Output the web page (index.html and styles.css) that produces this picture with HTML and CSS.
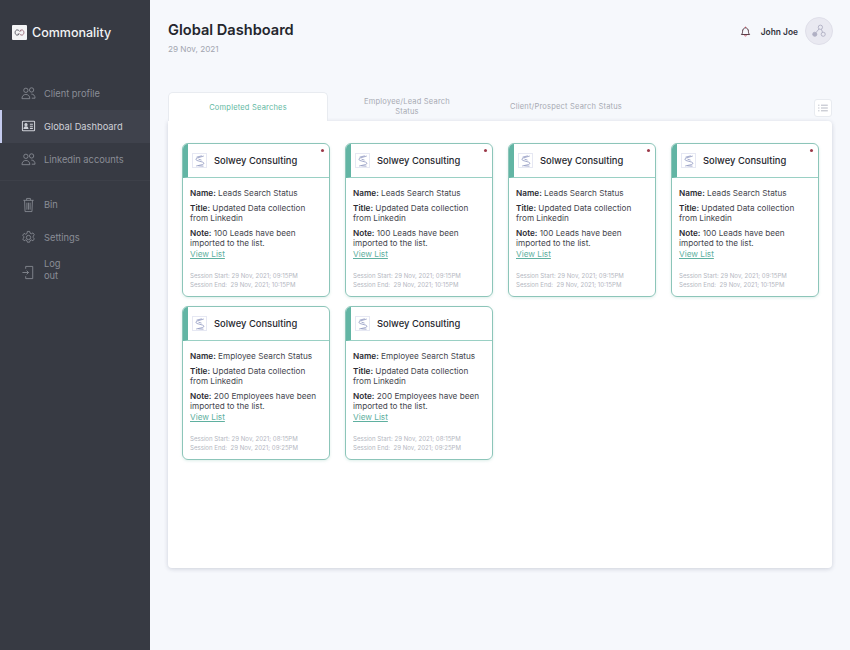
FILE: index.html
```html
<!DOCTYPE html>
<html lang="en">
<head>
  <meta charset="UTF-8" />
  <title>Global Dashboard</title>
  <link rel="stylesheet" href="styles.css">
</head>
<body>

  <div class="app">
    <!-- Sidebar -->
    <aside class="sidebar">
      <div class="brand">
        <span class="brand-logo">
          <svg width="11" height="7" viewBox="0 0 12 8" fill="none" stroke="#5a5a64" stroke-width="1.100"><path d="M6 2.600C5.200 1.600 4.400 1 3.300 1 2 1 1 2.400 1 4s1 3 2.300 3c1 0 1.600-.5 2.200-1.200H4"/><path d="M6 5.400C6.800 6.400 7.600 7 8.700 7 10 7 11 5.600 11 4S10 1 8.700 1c-1 0-1.600.5-2.200 1.200H8" stroke="#9a6a78"/></svg>
        </span>
        <span class="brand-name">Commonality</span>
      </div>

      <nav class="nav nav-main">
        <a class="nav-item" href="#">
          <svg class="nav-icon" viewBox="0 0 16 14" fill="none" stroke="currentColor" stroke-width="0.9"><circle cx="5.200" cy="3.600" r="2.300"/><circle cx="11.300" cy="3.200" r="2.300"/><path d="M1 12.500c0-2.800 1.700-4.500 4.200-4.500s4.200 1.700 4.200 4.500z"/><path d="M11 7.600c2.400 0 4 1.600 4 4.400h-3.500"/></svg>
          <span>Client profile</span>
        </a>
        <a class="nav-item active" href="#">
          <svg class="nav-icon" viewBox="0 0 16 14" fill="none" stroke="currentColor" stroke-width="1.100"><rect x="1.500" y="1.500" width="13" height="10" rx="0.800"/><circle cx="5.300" cy="5" r="1.200" fill="currentColor"/><path d="M3.200 9.200c0-1.500 1-2 2.100-2s2.100.5 2.100 2z" fill="currentColor"/><path d="M9.500 4.600h3.200M9.500 6.800h3.200M9.500 9h3.200"/></svg>
          <span>Global Dashboard</span>
        </a>
        <a class="nav-item" href="#">
          <svg class="nav-icon" viewBox="0 0 16 14" fill="none" stroke="currentColor" stroke-width="0.9"><circle cx="5.200" cy="3.600" r="2.300"/><circle cx="11.300" cy="3.200" r="2.300"/><path d="M1 12.500c0-2.800 1.700-4.500 4.200-4.500s4.200 1.700 4.200 4.500z"/><path d="M11 7.600c2.400 0 4 1.600 4 4.400h-3.500"/></svg>
          <span>Linkedin accounts</span>
        </a>
      </nav>

      <nav class="nav nav-bottom">
        <a class="nav-item" href="#">
          <svg class="nav-icon bin-icon" viewBox="0 0 16 16" fill="none" stroke="currentColor" stroke-width="0.9"><path d="M2.500 3h11M6 3V1h4v2M3.800 3l.5 12h7.400l.5-12M6.300 5.500v7.500M8 5.500v7.500M9.700 5.500v7.500"/></svg>
          <span>Bin</span>
        </a>
        <a class="nav-item" href="#">
          <svg class="nav-icon" viewBox="0 0 16 16" fill="none" stroke="currentColor" stroke-width="0.9"><circle cx="8" cy="8" r="2.300"/><path d="M6.800 1.500h2.400l.4 1.800 1.500.7 1.600-.9 1.500 2-1.200 1.400v1.500l1.200 1.500-1.500 2-1.600-.9-1.500.7-.4 1.700H6.800l-.4-1.700-1.500-.7-1.600.9-1.500-2L3 8.500V7L1.800 5.600l1.500-2 1.600.9 1.500-.7z"/></svg>
          <span>Settings</span>
        </a>
        <a class="nav-item logout" href="#">
          <svg class="nav-icon" viewBox="0 0 16 16" fill="none" stroke="currentColor" stroke-width="0.9"><path d="M5 4V1.500h7.500v13H5V12"/><path d="M1.500 8h6.500M6 6l2 2-2 2"/></svg>
          <span>Log<br>out</span>
        </a>
      </nav>
    </aside>

    <!-- Main content -->
    <main class="main">
      <header class="topbar">
        <div>
          <h1>Global Dashboard</h1>
          <p class="date">29 Nov, 2021</p>
        </div>
        <div class="user">
          <svg class="bell" width="11" height="11" viewBox="0 0 12 12" fill="none" stroke="#4a2a36" stroke-width="1"><path d="M1.500 9.300c1-1 1.300-1.800 1.300-3.500C2.800 3.800 4.200 2 6 2s3.200 1.800 3.200 3.800c0 1.700.3 2.500 1.300 3.500z"/><path d="M4.800 10.300c.3.700 2.100.7 2.400 0" stroke="#c23a4a"/><path d="M6 .8V2" stroke="#c23a4a"/></svg>
          <span class="user-name">John Joe</span>
          <span class="avatar">
            <svg width="14" height="14" viewBox="0 0 15 15" fill="none" stroke="#b0b0c4" stroke-width="1"><circle cx="9" cy="3.500" r="2.300"/><circle cx="3" cy="11" r="2.200" fill="#b0b0c4"/><circle cx="12" cy="11" r="2.200"/><path d="M7.500 5.300 4.300 9.200M10 5.600l1.300 3.200"/></svg>
          </span>
        </div>
      </header>

      <div class="tabs-row">
        <a class="tab active" href="#">Completed Searches</a>
        <a class="tab" href="#">Employee/Lead Search Status</a>
        <a class="tab tab-wide" href="#">Client/Prospect Search Status</a>
        <button class="list-btn">
          <svg width="10" height="8" viewBox="0 0 12 10" fill="none" stroke="#a4a8b6" stroke-width="1"><path d="M3.500 1.500H12M3.500 5H12M3.500 8.500H12M0 1.500h1.500M0 5h1.500M0 8.500h1.500"/></svg>
        </button>
      </div>

      <section class="panel">
        <div class="card-grid" id="cards"></div>
      </section>
    </main>
  </div>

  <script>
    const cards = [
      { name: "Leads Search Status", note: "100 Leads have been", start: "09:15PM", end: "10:15PM", dot: true },
      { name: "Leads Search Status", note: "100 Leads have been", start: "09:15PM", end: "10:15PM", dot: true },
      { name: "Leads Search Status", note: "100 Leads have been", start: "09:15PM", end: "10:15PM", dot: true },
      { name: "Leads Search Status", note: "100 Leads have been", start: "09:15PM", end: "10:15PM", dot: true },
      { name: "Employee Search Status", note: "200 Employees have been", start: "08:15PM", end: "09:25PM" },
      { name: "Employee Search Status", note: "200 Employees have been", start: "08:15PM", end: "09:25PM" }
    ];

    const logo = `<svg width="10" height="12" viewBox="0 0 10 12" fill="none" stroke="#8f98c0" stroke-width="0.8"><path d="M8.800 1 2.200 3C.6 3.500.6 5 2 5.500l5.600 1.600C9.200 7.600 9.200 9 7.800 9.500L1.200 11"/><path d="M6.800.8 1.500 2.200M3.500 4.200l3 .9M8.500 11.200 3.200 10.800"/></svg>`;

    document.getElementById("cards").innerHTML = cards.map(c => `
      <article class="card">
        <div class="card-head">
          <span class="card-logo">${logo}</span>
          <span class="card-title">Solwey Consulting</span>
          ${c.dot ? '<span class="dot"></span>' : ''}
        </div>
        <div class="card-body">
          <p><b>Name:</b> ${c.name}</p>
          <p><b>Title:</b> Updated Data collection<br>from Linkedin</p>
          <p class="note"><b>Note:</b> ${c.note}<br>imported to the list.</p>
          <a class="view-link" href="#">View List</a>
          <div class="session">
            Session Start: 29 Nov, 2021; ${c.start}<br>
            Session End:&nbsp; 29 Nov, 2021; ${c.end}
          </div>
        </div>
      </article>`).join("");
  </script>

</body>
</html>
```

FILE: styles.css
```css
* { box-sizing: border-box; margin: 0; padding: 0; font-family: Inter, "Liberation Sans", sans-serif; }
html, body { height: 100%; }
body { background-color: #f6f8fc; overflow: hidden; }
a { text-decoration: none; }
.app { display: flex; height: 650px; }

/* sidebar */
.sidebar {
  width: 150px;
  flex-shrink: 0;
  background: #373a43;
  color: #8a8d96;
}
.brand {
  display: flex;
  align-items: center;
  gap: 5px;
  height: 64px;
  padding-left: 12px;
}
.brand-logo {
  width: 15px;
  height: 15px;
  background: #f4f4f6;
  border-radius: 1px;
  display: flex;
  align-items: center;
  justify-content: center;
}
.brand-name { color: #f2f3f5; font-size: 12.5px; font-weight: 500; }
.nav-item {
  display: flex;
  align-items: center;
  gap: 8px;
  height: 33px;
  padding-left: 21px;
  font-size: 9.3px;
  color: #8a8d96;
}
.nav-icon { width: 15px; height: 15px; flex-shrink: 0; }
.bin-icon { height: 16px; }
.nav-main {
  margin-top: 13px;
  padding-bottom: 4px;
  border-bottom: 1px solid #3d4049;
}
.nav-item.active {
  background: #3f424c;
  color: #cfd1d8;
  border-left: 2px solid #c5cbee;
  padding-left: 19px;
}
.nav-bottom { margin-top: 7px; }
.logout { height: 36px; line-height: 12px; }
.logout span { margin-top: -4px; }

/* main area */
.main { flex: 1; padding: 0 18px; }
.topbar {
  display: flex;
  justify-content: space-between;
  height: 92px;
  padding-top: 21px;
}
h1 { font-size: 14.6px; font-weight: 600; color: #24262d; line-height: 19px; }
.date { font-size: 8.2px; color: #a3a6b0; margin-top: 4px; }
.user {
  display: flex;
  align-items: flex-start;
  height: 30px;
  margin: -4px -1px 0 0;
}
.bell { margin-top: 9px; }
.user-name { font-size: 8.4px; font-weight: 600; color: #33343c; margin: 10px 7px 0 10px; }
.avatar {
  width: 28px;
  height: 28px;
  border-radius: 50%;
  background: #e9e9f1;
  border: 1px solid #dfdfe9;
  display: flex;
  align-items: center;
  justify-content: center;
}

/* tabs */
.tabs-row { display: flex; height: 29px; position: relative; }
.tab {
  width: 158px;
  display: flex;
  align-items: center;
  justify-content: center;
  text-align: center;
  padding: 0 32px;
  font-size: 7.5px;
  line-height: 10px;
  letter-spacing: 0.2px;
  color: #a7aab3;
}
.tab-wide { width: 160px; padding: 0; white-space: nowrap; }
.tab.active {
  width: 160px;
  background: #fff;
  color: #5fb8a2;
  border: 1px solid #e8ebf0;
  border-bottom: 0;
  border-radius: 5px 5px 0 0;
  padding: 2px 0 0;
}
.list-btn {
  margin-left: auto;
  margin-top: 7px;
  width: 18px;
  height: 18px;
  background: #fff;
  border: 1px solid #e8ebf0;
  border-radius: 3px;
  display: flex;
  align-items: center;
  justify-content: center;
  cursor: pointer;
}

/* panel and cards */
.panel {
  height: 447px;
  background: #fff;
  border-radius: 0 4px 4px 4px;
  box-shadow: 0 1px 4px rgba(60,70,100,0.22);
  padding: 22px 13px 0 14px;
}
.card-grid {
  display: grid;
  grid-template-columns: repeat(4, 148px);
  grid-auto-rows: 154px;
  column-gap: 15px;
  row-gap: 9px;
}
.card {
  border: 1px solid #8cc5b9;
  border-radius: 6px;
  box-shadow: 0 1px 3px rgba(90,170,150,0.2);
  overflow: hidden;
}
.card-head {
  display: flex;
  align-items: center;
  gap: 7px;
  height: 34px;
  padding-left: 4px;
  border-left: 5px solid #62b5a4;
  border-bottom: 1px solid #9ad0c4;
  position: relative;
}
.card-logo {
  width: 15px;
  height: 15px;
  border: 1px solid #e6e8f3;
  display: flex;
  align-items: center;
  justify-content: center;
}
.card-title { font-size: 9.4px; font-weight: 500; color: #26272e; white-space: nowrap; }
.dot {
  position: absolute;
  top: 5px;
  right: 5px;
  width: 3px;
  height: 3px;
  border-radius: 50%;
  background: #9c3a4a;
}
.card-body { padding: 10px 6px 0 7px; font-size: 8.2px; line-height: 10px; color: #45464e; }
.card-body p { margin-bottom: 5px; }
.card-body b { font-weight: 600; color: #2b2c33; }
.card-body .note { margin-bottom: 1px; }
.view-link { color: #5fb0a0; text-decoration: underline; display: block; }
.session {
  margin-top: 13px;
  font-size: 6.1px;
  line-height: 8.5px;
  color: #b4b7bf;
  white-space: nowrap;
}
```
